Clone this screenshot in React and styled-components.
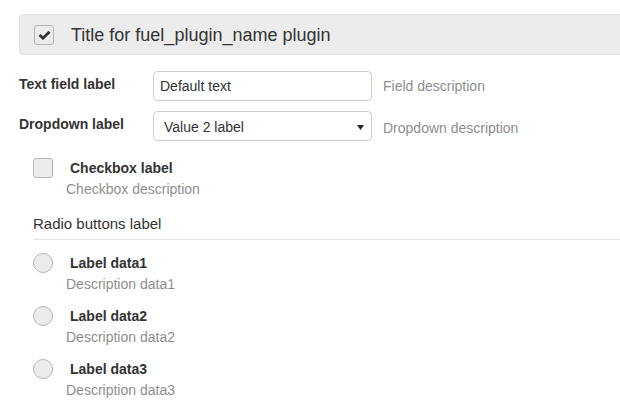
import React from 'react';
import styled, { createGlobalStyle } from 'styled-components';

const GlobalStyle = createGlobalStyle`
  html, body {
    margin: 0;
    padding: 0;
    background: #fff;
    overflow: hidden;
  }
  body {
    font-family: "Liberation Sans", Arial, sans-serif;
    font-size: 14px;
    line-height: 20px;
    color: #333;
  }
`;

const Page = styled.div`
  width: 620px;
  height: 413px;
  overflow: hidden;
  padding-top: 14px;
  box-sizing: border-box;
`;

const Header = styled.div`
  display: flex;
  align-items: center;
  gap: 17px;
  height: 41px;
  box-sizing: border-box;
  margin-left: 19px;
  margin-right: -20px;
  padding-left: 14px;
  background: #ececec;
  border: 1px solid #e2e2e2;
  border-radius: 4px;
`;

const Title = styled.span`
  font-size: 18px;
  color: #333;
`;

const Box = styled.span`
  display: inline-flex;
  align-items: center;
  justify-content: center;
  flex: none;
  width: 20px;
  height: 20px;
  box-sizing: border-box;
  border: 1px solid #b5b5b5;
  border-radius: ${(p) => (p.$round ? '50%' : '3px')};
  background: #ececec;
`;

const Form = styled.div`
  display: flex;
  flex-direction: column;
  gap: 10px;
  margin-top: 16px;
  padding-left: 19px;
`;

const FieldRow = styled.div`
  display: flex;
  align-items: flex-start;
  height: 30px;
`;

const FieldLabel = styled.label`
  width: 134px;
  padding-top: 3px;
  font-weight: bold;
`;

const TextInput = styled.input`
  width: 219px;
  height: 30px;
  box-sizing: border-box;
  padding: 0 6px;
  border: 1px solid #cfcfcf;
  border-radius: 4px;
  font: inherit;
  color: #333;
  outline: none;
`;

const Select = styled.div`
  display: flex;
  align-items: center;
  justify-content: space-between;
  width: 219px;
  height: 30px;
  box-sizing: border-box;
  padding: 2px 7px 0 10px;
  border: 1px solid #cfcfcf;
  border-radius: 4px;
`;

const Caret = styled.svg`
  width: 7px;
  height: 5px;
`;

const Help = styled.span`
  align-self: center;
  margin-left: 11px;
  padding-top: ${(p) => p.$pt || 0}px;
  color: #8e8e8e;
`;

const Options = styled.div`
  margin-top: 17px;
  padding-left: 33px;
`;

const Choice = styled.div`
  display: grid;
  grid-template-columns: 20px 1fr;
  column-gap: 13px;
  row-gap: 1px;
  margin-bottom: ${(p) => p.$mb || 0}px;
`;

const ChoiceLabel = styled.span`
  padding-left: 4px;
  font-weight: bold;
`;

const ChoiceDesc = styled.span`
  grid-column: 2;
  color: #8e8e8e;
`;

const GroupLabel = styled.div`
  margin-top: 15px;
  padding-bottom: 5px;
  font-size: 15px;
  border-bottom: 1px solid #e5e5e5;
  margin-bottom: 13px;
`;

const radios = [
  ['Label data1', 'Description data1'],
  ['Label data2', 'Description data2'],
  ['Label data3', 'Description data3'],
];

export default function App() {
  return (
    <Page>
      <GlobalStyle />
      <Header>
        <Box>
          <svg width="13" height="10" viewBox="0 0 13 10">
            <path d="M1.5 5 L5 8.2 L11.5 1.8" fill="none" stroke="#333" strokeWidth="2.8" />
          </svg>
        </Box>
        <Title>Title for fuel_plugin_name plugin</Title>
      </Header>

      <Form>
        <FieldRow>
          <FieldLabel>Text field label</FieldLabel>
          <TextInput defaultValue="Default text" />
          <Help>Field description</Help>
        </FieldRow>
        <FieldRow>
          <FieldLabel>Dropdown label</FieldLabel>
          <Select>
            <span>Value 2 label</span>
            <Caret viewBox="0 0 7 5">
              <path d="M0 0 H7 L3.5 5 Z" fill="#222" />
            </Caret>
          </Select>
          <Help $pt={4}>Dropdown description</Help>
        </FieldRow>
      </Form>

      <Options>
        <Choice>
          <Box />
          <ChoiceLabel>Checkbox label</ChoiceLabel>
          <ChoiceDesc>Checkbox description</ChoiceDesc>
        </Choice>

        <GroupLabel>Radio buttons label</GroupLabel>

        {radios.map(([label, desc], i) => (
          <Choice key={label} $mb={i < radios.length - 1 ? 12 : 0}>
            <Box $round />
            <ChoiceLabel>{label}</ChoiceLabel>
            <ChoiceDesc>{desc}</ChoiceDesc>
          </Choice>
        ))}
      </Options>
    </Page>
  );
}
